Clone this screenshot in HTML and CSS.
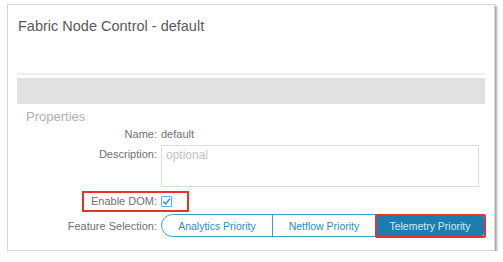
FILE: index.html
```html
<!DOCTYPE html>
<html lang="en">
<head>
    <meta charset="UTF-8">
    <title>Fabric Node Control - default</title>
    <link rel="stylesheet" href="styles.css">
</head>
<body>
    <div class="panel">
        <h1 class="panel-title">Fabric Node Control - default</h1>
        <div class="divider"></div>
        <div class="toolbar"></div>
        <div class="section">
            <div class="section-title">Properties</div>
            <div class="form-row">
                <label class="form-label">Name:</label>
                <span class="form-value">default</span>
            </div>
            <div class="form-row form-row-top">
                <label class="form-label">Description:</label>
                <div class="textarea">optional</div>
            </div>
            <div class="form-row form-row-dom">
                <label class="form-label">Enable DOM:</label>
                <span class="checkbox">
                    <svg width="9" height="9" viewBox="0 0 9 9">
                        <path d="M1.2 4.6 L3.6 7 L8 1.6" fill="none" stroke="#2b8fd0" stroke-width="1.5"/>
                    </svg>
                </span>
                <span class="highlight highlight-dom"></span>
            </div>
            <div class="form-row form-row-feature">
                <label class="form-label">Feature Selection:</label>
                <div class="segmented">
                    <div class="segment segment-first">Analytics Priority</div>
                    <div class="segment">Netflow Priority</div>
                    <div class="segment segment-selected">Telemetry Priority
                        <span class="highlight highlight-seg"></span>
                    </div>
                </div>
            </div>
        </div>
    </div>
</body>
</html>
```

FILE: styles.css
```css
body {
    margin: 0;
    background: #ffffff;
    font-family: 'Liberation Sans', Arial, sans-serif;
}
.panel {
    margin: 4px 0 0 7px;
    width: 488px;
    height: 247px;
    border: 1px solid #d6d6d6;
    box-shadow: 2px 2px 2px rgba(0, 0, 0, 0.35);
    box-sizing: border-box;
    padding: 0 9px 0 9px;
}
.panel-title {
    margin: 0;
    padding: 11px 0 0 1px;
    font-size: 14.5px;
    font-weight: normal;
    line-height: 20px;
    color: #5a5a5a;
}
.divider {
    margin-top: 37px;
    height: 2px;
    background: #eeeeee;
}
.toolbar {
    margin-top: 3px;
    height: 26px;
    background: #e1e1e1;
}
.section {
    padding-top: 5px;
}
.section-title {
    padding-left: 9px;
    font-size: 13px;
    line-height: 16px;
    color: #b0b0b0;
}
.form-row {
    display: flex;
    align-items: center;
    position: relative;
    font-size: 11px;
    color: #6a6a6a;
}
.form-label {
    width: 140px;
    flex: none;
    text-align: right;
    margin-right: 4px;
    color: #707070;
}
.form-row .form-label {
    line-height: 18px;
}
.form-value {
    color: #707070;
}
.form-row-top {
    align-items: flex-start;
    margin-top: 2px;
}
.form-row-top .form-label {
    line-height: 16px;
    padding-top: 1px;
}
.textarea {
    width: 318px;
    height: 42px;
    box-sizing: border-box;
    border: 1px solid #dddddd;
    padding: 2px 4px;
    font-size: 12px;
    color: #c4c4c4;
}
.form-row-dom {
    margin-top: 4px;
    height: 20px;
}
.checkbox {
    width: 11px;
    height: 11px;
    box-sizing: border-box;
    border: 1px solid #5fb0dd;
    border-radius: 1px;
    display: flex;
    align-items: center;
    justify-content: center;
}
.highlight {
    position: absolute;
    border: 2px solid #e8322b;
    box-sizing: border-box;
}
.highlight-dom {
    left: 65px;
    top: 0;
    width: 107px;
    height: 21px;
}
.form-row-feature {
    margin-top: 3px;
}
.segmented {
    display: flex;
    width: 327px;
    height: 23px;
    box-sizing: border-box;
    border: 1.5px solid #3f9fcb;
    border-radius: 12px 3px 3px 12px;
    overflow: visible;
}
.segment {
    flex: 1;
    display: flex;
    align-items: center;
    justify-content: center;
    font-size: 10.5px;
    color: #2a8dc4;
    border-left: 1px solid #3f9fcb;
    position: relative;
}
.segment-first {
    border-left: none;
    flex: 0 0 110px;
}
.segment:nth-child(2) {
    flex: 0 0 102px;
}
.segment-selected {
    background: #1b7eb1;
    color: #d4eaf6;
    border-radius: 0 3px 3px 0;
}
.highlight-seg {
    left: -1px;
    top: -1.5px;
    right: -1.5px;
    bottom: -1.5px;
    border-radius: 2px;
}
```
